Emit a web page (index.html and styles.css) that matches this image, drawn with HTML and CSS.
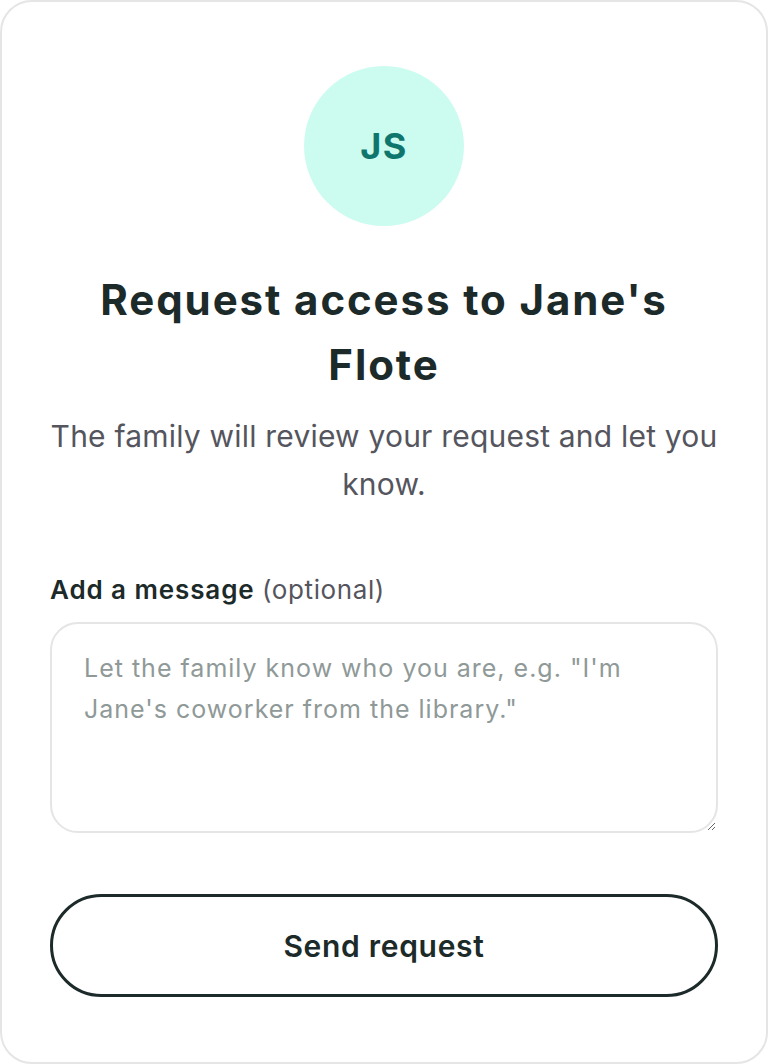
FILE: index.html
```html
<!DOCTYPE html>
<html lang="en">
<head>
<meta charset="utf-8">
<title>Request access</title>
<link rel="stylesheet" href="styles.css">
</head>
<body>
<main class="card">
  <div class="avatar">JS</div>
  <h1 class="title">Request access to Jane's Flote</h1>
  <p class="subtitle">The family will review your request and let you know.</p>
  <form class="form">
    <label class="label" for="msg">Add a message <span class="optional">(optional)</span></label>
    <textarea id="msg" class="message" placeholder="Let the family know who you are, e.g. &quot;I'm Jane's coworker from the library.&quot;"></textarea>
    <button type="button" class="send">Send request</button>
  </form>
</main>
</body>
</html>
```

FILE: styles.css
```css
* { box-sizing: border-box; }
html, body {
  margin: 0;
  padding: 0;
  background: #ffffff;
}
body {
  font-family: Inter, "Noto Sans", sans-serif;
  color: #1c2a29;
}
.card {
  width: 768px;
  height: 1064px;
  border: 2px solid #e5e5e5;
  border-radius: 32px;
  padding: 64px 48px 64px;
  display: flex;
  flex-direction: column;
  align-items: center;
}
.avatar {
  width: 160px;
  height: 160px;
  border-radius: 50%;
  background: #ccfbef;
  color: #0f766e;
  font-weight: 700;
  font-size: 36px;
  letter-spacing: 1.5px;
  display: flex;
  align-items: center;
  justify-content: center;
  flex-shrink: 0;
}
.title {
  margin: 41px 0 0;
  font-size: 42px;
  line-height: 65px;
  font-weight: 700;
  letter-spacing: 1.9px;
  text-align: center;
  color: #1c2a29;
  padding: 0 40px;
}
.subtitle {
  margin: 15px 0 0;
  font-size: 30px;
  line-height: 48px;
  letter-spacing: 0.2px;
  color: #55555e;
  text-align: center;
}
.form {
  width: 100%;
  margin-top: 64px;
  display: flex;
  flex-direction: column;
}
.label {
  font-size: 26px;
  line-height: 36px;
  font-weight: 600;
  letter-spacing: 0.9px;
  color: #1c2a29;
}
.optional {
  font-weight: 400;
  letter-spacing: 0.6px;
  color: #55555e;
}
.message {
  margin-top: 14px;
  width: 100%;
  height: 211px;
  border: 2px solid #e5e5e5;
  border-radius: 28px;
  padding: 24px 32px;
  font-family: Inter, "Noto Sans", sans-serif;
  font-size: 25px;
  line-height: 41px;
  letter-spacing: 1px;
  color: #1c2a29;
  resize: vertical;
  outline: none;
}
.message::placeholder {
  color: #8f9998;
}
.send {
  margin-top: 61px;
  width: 100%;
  height: 103px;
  flex-shrink: 0;
  border: 3px solid #1c2a29;
  border-radius: 52px;
  background: #ffffff;
  font-family: Inter, "Noto Sans", sans-serif;
  font-size: 30px;
  font-weight: 600;
  letter-spacing: 0.7px;
  color: #1c2a29;
}
```
